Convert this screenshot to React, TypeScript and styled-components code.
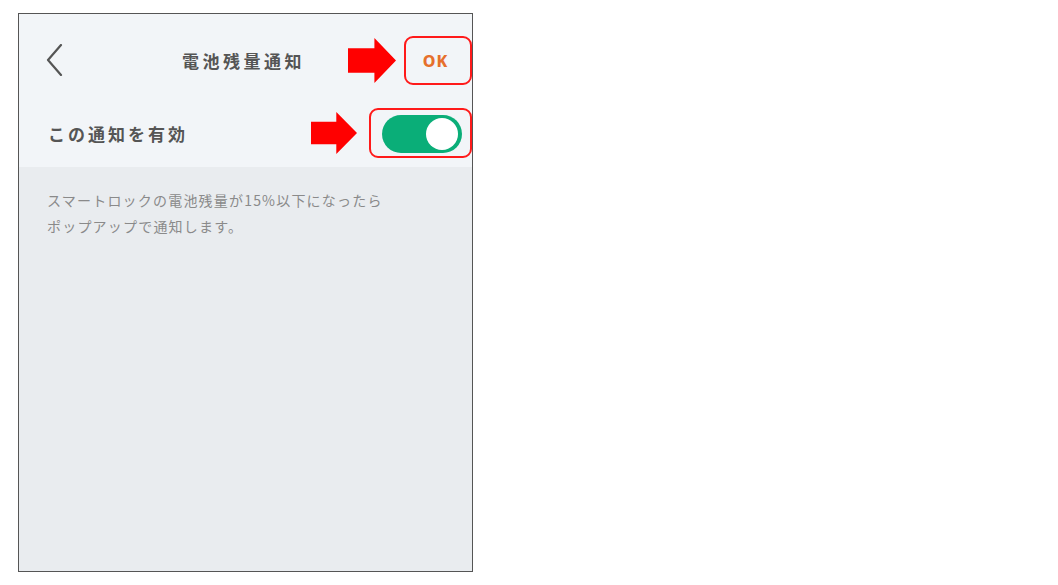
import React from "react";
import styled, { createGlobalStyle } from "styled-components";

const Global = createGlobalStyle`
  html, body { margin: 0; padding: 0; background: #ffffff; }
  body { font-family: "Noto Sans CJK JP", "Noto Sans", sans-serif; }
  *, *::before, *::after { box-sizing: border-box; }
`;

const Page = styled.div`
  width: 1058px;
  height: 585px;
  padding: 13px 0 0 18px;
`;

const Frame = styled.div`
  width: 455px;
  height: 559px;
  border: 1px solid #555555;
  background: #e9ecef;
  display: flex;
  flex-direction: column;
`;

const Top = styled.div`
  background: #f2f5f8;
  display: flex;
  flex-direction: column;
`;

const Header = styled.div`
  height: 92px;
  display: grid;
  grid-template-columns: 1fr auto 1fr;
  align-items: center;
`;

const Back = styled.button`
  justify-self: start;
  margin-left: 27px;
  background: none;
  border: none;
  padding: 0;
  width: 18px;
  height: 32px;
  display: flex;
  align-items: center;
  cursor: pointer;
`;

const Title = styled.h1`
  margin: 0;
  font-size: 17px;
  font-weight: 700;
  letter-spacing: 3.5px;
  color: #555555;
  padding-right: 4px;
`;

const RightGroup = styled.div<{ $gap: number }>`
  justify-self: end;
  display: flex;
  align-items: center;
  gap: ${(p) => p.$gap}px;
`;

const Annotated = styled.div<{ $w: number; $h: number }>`
  width: ${(p) => p.$w}px;
  height: ${(p) => p.$h}px;
  border: 2px solid #ff1a1a;
  border-radius: 9px;
  display: flex;
  align-items: center;
`;

const OkButton = styled.button`
  background: none;
  border: none;
  width: 100%;
  padding: 2px 5px 0 0;
  font-family: "Noto Sans", "Noto Sans CJK JP", sans-serif;
  font-size: 16px;
  font-weight: 800;
  letter-spacing: 1px;
  color: #e6702c;
  cursor: pointer;
`;

const ToggleRow = styled.div`
  height: 61px;
  display: flex;
  align-items: center;
  justify-content: space-between;
  padding: 0 0 7px 29px;
`;

const Label = styled.span`
  font-size: 17px;
  font-weight: 700;
  letter-spacing: 3px;
  color: #555555;
`;

const Switch = styled.div<{ $on: boolean }>`
  width: 80px;
  height: 38px;
  border-radius: 19px;
  background: ${(p) => (p.$on ? "#0aae78" : "#c8ccd0")};
  display: flex;
  align-items: center;
  justify-content: ${(p) => (p.$on ? "flex-end" : "flex-start")};
  padding: 0 4px;
  margin: 2px 0 0 11px;
`;

const Knob = styled.div`
  width: 32px;
  height: 32px;
  border-radius: 50%;
  background: #ffffff;
`;

const Body = styled.div`
  padding: 20px 28px;
`;

const Description = styled.p`
  margin: 0;
  font-size: 14px;
  line-height: 26px;
  letter-spacing: 1.2px;
  color: #8a8a8a;
`;

const Arrow = ({ w, h }: { w: number; h: number }) => {
  const shaftTop = h * 0.23;
  const shaftBot = h * 0.77;
  const headX = w * 0.55;
  return (
    <svg width={w} height={h} viewBox={`0 0 ${w} ${h}`}>
      <polygon
        points={`0,${shaftTop} ${headX},${shaftTop} ${headX},0 ${w},${h / 2} ${headX},${h} ${headX},${shaftBot} 0,${shaftBot}`}
        fill="#ff0000"
      />
    </svg>
  );
};

export default function App() {
  return (
    <>
      <Global />
      <Page>
        <Frame>
          <Top>
            <Header>
              <Back aria-label="戻る">
                <svg width="18" height="32" viewBox="0 0 18 32">
                  <polyline
                    points="15,1 2,16 15,31"
                    fill="none"
                    stroke="#555555"
                    strokeWidth="2.2"
                    strokeLinecap="round"
                    strokeLinejoin="round"
                  />
                </svg>
              </Back>
              <Title>電池残量通知</Title>
              <RightGroup $gap={8}>
                <Arrow w={48} h={45} />
                <Annotated $w={68} $h={49}>
                  <OkButton>OK</OkButton>
                </Annotated>
              </RightGroup>
            </Header>
            <ToggleRow>
              <Label>この通知を有効</Label>
              <RightGroup $gap={12}>
                <Arrow w={46} h={42} />
                <Annotated $w={103} $h={50}>
                  <Switch $on>
                    <Knob />
                  </Switch>
                </Annotated>
              </RightGroup>
            </ToggleRow>
          </Top>
          <Body>
            <Description>
              スマートロックの電池残量が15%以下になったら
              <br />
              ポップアップで通知します。
            </Description>
          </Body>
        </Frame>
      </Page>
    </>
  );
}
